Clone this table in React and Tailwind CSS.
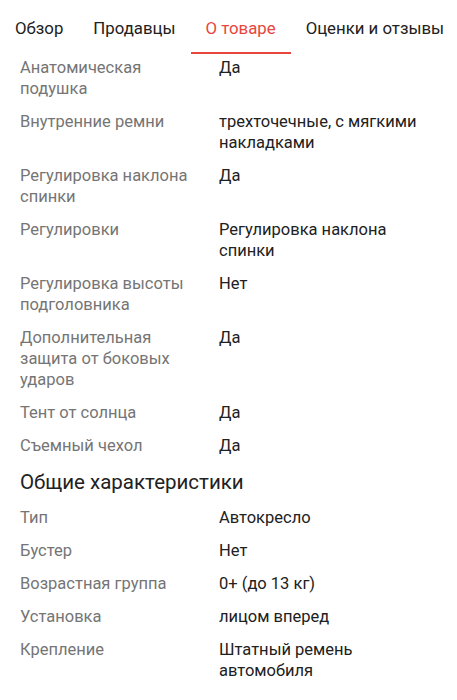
const tabs = ["Обзор", "Продавцы", "О товаре", "Оценки и отзывы"];

const seatSpecs = [
  ["Анатомическая подушка", "Да"],
  ["Внутренние ремни", "трехточечные, с мягкими накладками"],
  ["Регулировка наклона спинки", "Да"],
  ["Регулировки", "Регулировка наклона спинки"],
  ["Регулировка высоты подголовника", "Нет"],
  ["Дополнительная защита от боковых ударов", "Да"],
  ["Тент от солнца", "Да"],
  ["Съемный чехол", "Да"],
];

const generalSpecs = [
  ["Тип", "Автокресло"],
  ["Бустер", "Нет"],
  ["Возрастная группа", "0+ (до 13 кг)"],
  ["Установка", "лицом вперед"],
  ["Крепление", "Штатный ремень автомобиля"],
];

const SpecRow = ({ label, value }) => (
  <div className="flex">
    <div className="w-[199px] shrink-0 pr-[8px] text-[#757575]">{label}</div>
    <div className="w-[220px] text-[#212121]">{value}</div>
  </div>
);

export default function App() {
  return (
    <div
      className="w-[457px] h-[700px] overflow-hidden bg-white text-[16.5px] leading-[21px]"
      style={{ fontFamily: "Roboto, 'Noto Sans', sans-serif" }}
    >
      {/* Tabs */}
      <div className="flex h-[54px] whitespace-nowrap">
        {tabs.map((t, i) => (
          <div key={t} className="relative px-[15px] pt-[17px] text-[16.8px] leading-[22px]">
            <span className={i === 2 ? "text-[#e8453c]" : "text-[#212121]"}>{t}</span>
            {i === 2 && <div className="absolute left-0 right-0 top-[52px] h-[2px] bg-[#e8453c]" />}
          </div>
        ))}
      </div>

      {/* Specs */}
      <div className="px-[20px] pt-[3px] flex flex-col gap-[12px]">
        {seatSpecs.map(([l, v]) => (
          <SpecRow key={l} label={l} value={v} />
        ))}
        <div className="pt-[1px] text-[20.5px] leading-[26px] text-[#212121]">Общие характеристики</div>
        {generalSpecs.map(([l, v]) => (
          <SpecRow key={l} label={l} value={v} />
        ))}
      </div>
    </div>
  );
}
